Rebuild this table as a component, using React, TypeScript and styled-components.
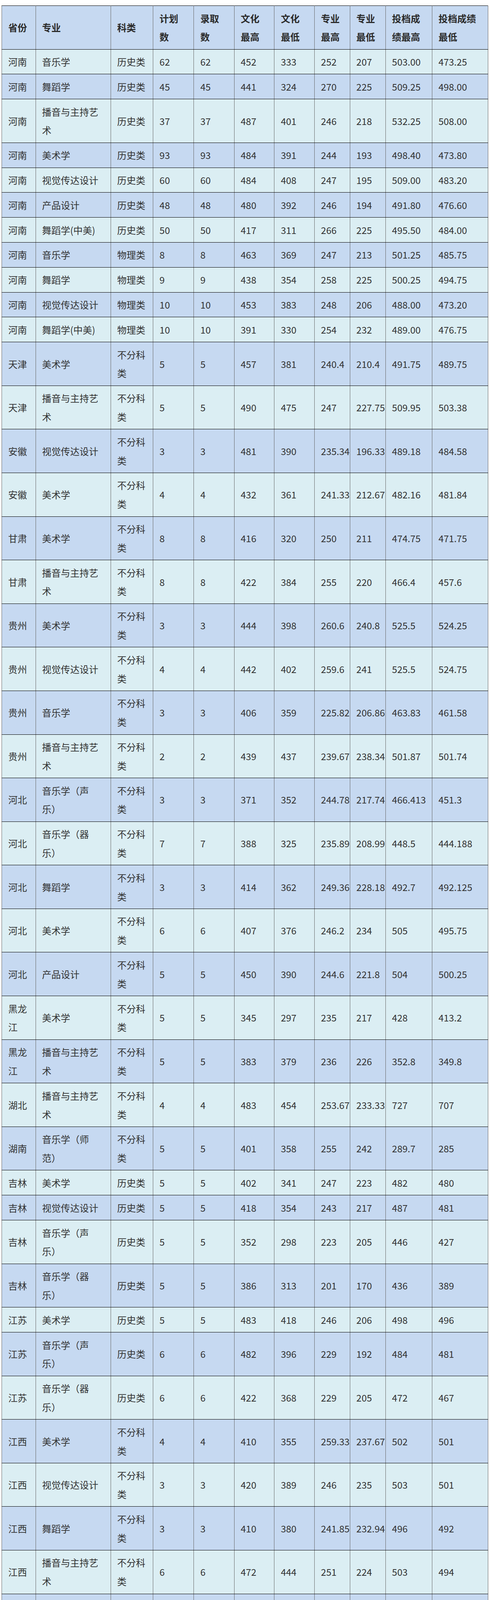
import React from 'react';
import styled, { createGlobalStyle } from 'styled-components';

const GlobalStyle = createGlobalStyle`
  html, body {
    margin: 0;
    padding: 0;
    background: #ffffff;
  }
  body {
    font-family: 'Noto Sans CJK SC', 'Noto Sans', sans-serif;
    color: #333333;
  }
`;

const palette = {
  blue: '#c6d9f1',
  cyan: '#dbeef3',
  rule: '#000000',
  divider: '#666666',
  text: '#333333',
};

const Page = styled.div`
  padding: 14px 3px 0 4px;
`;

const ScoreTable = styled.table`
  width: 1245px;
  table-layout: fixed;
  border-collapse: collapse;
  font-size: 24px;
  line-height: 47.8px;
  text-spacing-trim: space-all;
`;

const HeadRow = styled.tr`
  background-color: ${palette.blue};
`;

const BodyRow = styled.tr<{ $shaded: boolean }>`
  background-color: ${(props) => (props.$shaded ? palette.blue : palette.cyan)};
`;

const HeadCell = styled.th`
  padding: 7.5px 18px 7.5px 16px;
  text-align: left;
  vertical-align: middle;
  font-weight: 700;
  color: #2b2b2b;
  border-top: 1px solid ${palette.rule};
  border-bottom: 1px solid ${palette.rule};
  border-left: 1px solid ${palette.divider};
  border-right: 1px solid ${palette.divider};
  text-spacing-trim: space-all;
`;

const Cell = styled.td`
  padding: 7.5px 18px 7.5px 16px;
  text-align: left;
  vertical-align: middle;
  color: ${palette.text};
  border-top: 1px solid ${palette.rule};
  border-bottom: 1px solid ${palette.rule};
  border-left: 1px solid ${palette.divider};
  border-right: 1px solid ${palette.divider};
  white-space: normal;
  text-spacing-trim: space-all;
`;

const Num = styled.span`
  white-space: nowrap;
`;

const columnWidths = [86.5, 192.3, 108.3, 104.3, 103.4, 102.7, 102.6, 90.5, 91.3, 118.8, 143.7];

const headers = [
  '省份',
  '专业',
  '科类',
  '计划数',
  '录取数',
  '文化最高',
  '文化最低',
  '专业最高',
  '专业最低',
  '投档成绩最高',
  '投档成绩最低',
];

type Row = [string, string, string, string, string, string, string, string, string, string, string];

const rows: Row[] = [
  ['河南', '音乐学', '历史类', '62', '62', '452', '333', '252', '207', '503.00', '473.25'],
  ['河南', '舞蹈学', '历史类', '45', '45', '441', '324', '270', '225', '509.25', '498.00'],
  ['河南', '播音与主持艺术', '历史类', '37', '37', '487', '401', '246', '218', '532.25', '508.00'],
  ['河南', '美术学', '历史类', '93', '93', '484', '391', '244', '193', '498.40', '473.80'],
  ['河南', '视觉传达设计', '历史类', '60', '60', '484', '408', '247', '195', '509.00', '483.20'],
  ['河南', '产品设计', '历史类', '48', '48', '480', '392', '246', '194', '491.80', '476.60'],
  ['河南', '舞蹈学(中美)', '历史类', '50', '50', '417', '311', '266', '225', '495.50', '484.00'],
  ['河南', '音乐学', '物理类', '8', '8', '463', '369', '247', '213', '501.25', '485.75'],
  ['河南', '舞蹈学', '物理类', '9', '9', '438', '354', '258', '225', '500.25', '494.75'],
  ['河南', '视觉传达设计', '物理类', '10', '10', '453', '383', '248', '206', '488.00', '473.20'],
  ['河南', '舞蹈学(中美)', '物理类', '10', '10', '391', '330', '254', '232', '489.00', '476.75'],
  ['天津', '美术学', '不分科类', '5', '5', '457', '381', '240.4', '210.4', '491.75', '489.75'],
  ['天津', '播音与主持艺术', '不分科类', '5', '5', '490', '475', '247', '227.75', '509.95', '503.38'],
  ['安徽', '视觉传达设计', '不分科类', '3', '3', '481', '390', '235.34', '196.33', '489.18', '484.58'],
  ['安徽', '美术学', '不分科类', '4', '4', '432', '361', '241.33', '212.67', '482.16', '481.84'],
  ['甘肃', '美术学', '不分科类', '8', '8', '416', '320', '250', '211', '474.75', '471.75'],
  ['甘肃', '播音与主持艺术', '不分科类', '8', '8', '422', '384', '255', '220', '466.4', '457.6'],
  ['贵州', '美术学', '不分科类', '3', '3', '444', '398', '260.6', '240.8', '525.5', '524.25'],
  ['贵州', '视觉传达设计', '不分科类', '4', '4', '442', '402', '259.6', '241', '525.5', '524.75'],
  ['贵州', '音乐学', '不分科类', '3', '3', '406', '359', '225.82', '206.86', '463.83', '461.58'],
  ['贵州', '播音与主持艺术', '不分科类', '2', '2', '439', '437', '239.67', '238.34', '501.87', '501.74'],
  ['河北', '音乐学（声乐）', '不分科类', '3', '3', '371', '352', '244.78', '217.74', '466.413', '451.3'],
  ['河北', '音乐学（器乐）', '不分科类', '7', '7', '388', '325', '235.89', '208.99', '448.5', '444.188'],
  ['河北', '舞蹈学', '不分科类', '3', '3', '414', '362', '249.36', '228.18', '492.7', '492.125'],
  ['河北', '美术学', '不分科类', '6', '6', '407', '376', '246.2', '234', '505', '495.75'],
  ['河北', '产品设计', '不分科类', '5', '5', '450', '390', '244.6', '221.8', '504', '500.25'],
  ['黑龙江', '美术学', '不分科类', '5', '5', '345', '297', '235', '217', '428', '413.2'],
  ['黑龙江', '播音与主持艺术', '不分科类', '5', '5', '383', '379', '236', '226', '352.8', '349.8'],
  ['湖北', '播音与主持艺术', '不分科类', '4', '4', '483', '454', '253.67', '233.33', '727', '707'],
  ['湖南', '音乐学（师范）', '不分科类', '5', '5', '401', '358', '255', '242', '289.7', '285'],
  ['吉林', '美术学', '历史类', '5', '5', '402', '341', '247', '223', '482', '480'],
  ['吉林', '视觉传达设计', '历史类', '5', '5', '418', '354', '243', '217', '487', '481'],
  ['吉林', '音乐学（声乐）', '历史类', '5', '5', '352', '298', '223', '205', '446', '427'],
  ['吉林', '音乐学（器乐）', '历史类', '5', '5', '386', '313', '201', '170', '436', '389'],
  ['江苏', '美术学', '历史类', '5', '5', '483', '418', '246', '206', '498', '496'],
  ['江苏', '音乐学（声乐）', '历史类', '6', '6', '482', '396', '229', '192', '484', '481'],
  ['江苏', '音乐学（器乐）', '历史类', '6', '6', '422', '368', '229', '205', '472', '467'],
  ['江西', '美术学', '不分科类', '4', '4', '410', '355', '259.33', '237.67', '502', '501'],
  ['江西', '视觉传达设计', '不分科类', '3', '3', '420', '389', '246', '235', '503', '501'],
  ['江西', '舞蹈学', '不分科类', '3', '3', '410', '380', '241.85', '232.94', '496', '492'],
  ['江西', '播音与主持艺术', '不分科类', '6', '6', '472', '444', '251', '224', '503', '494'],
  ['辽宁', '美术学（师范）', '历史类', '4', '4', '407', '394', '232.2', '220.8', '63', '62'],
  ['辽宁', '视觉传达设计', '历史类', '5', '5', '437', '383', '237.2', '206.2', '62.5', '62'],
  ['辽宁', '播音与主持艺术', '历史类', '3', '3', '437', '422', '250.7', '246', '70.3', '69.9'],
  ['内蒙古', '播音与主持艺术', '不分科类', '8', '8', '477', '407', '244.8', '217.4', '500', '471'],
  ['内蒙古', '美术学', '不分科类', '8', '8', '434', '347', '255', '197', '469', '456'],
  ['山东', '美术学（师范）', '不分科类', '8', '8', '428', '354', '242.2', '212.4', '479.75', '478.25'],
  ['山东', '视觉传达设计', '不分科类', '7', '7', '434', '371', '240.8', '216.2', '488', '486.5'],
  ['山东', '产品设计', '不分科类', '7', '7', '461', '333', '255.4', '201.6', '485.75', '482.5'],
  ['重庆', '美术学', '不分科类', '2', '2', '391', '386', '250.6', '246.8', '202', '201'],
  ['重庆', '视觉传达设计', '不分科类', '3', '3', '454', '412', '241.4', '223', '203', '202'],
  ['重庆', '播音与主持艺术', '不分科类', '2', '2', '475', '466', '199.2', '189.6', '192', '189'],
];

const App = () => {
  return (
    <>
      <GlobalStyle />
      <Page>
        <ScoreTable>
          <colgroup>
            {columnWidths.map((w, i) => (
              <col key={i} style={{ width: w }} />
            ))}
          </colgroup>
          <thead>
            <HeadRow>
              {headers.map((h) => (
                <HeadCell key={h}>{h}</HeadCell>
              ))}
            </HeadRow>
          </thead>
          <tbody>
            {rows.map((row, index) => (
              <BodyRow key={index} $shaded={index % 2 === 1}>
                {row.map((value, col) => (
                  <Cell key={col}>{col >= 3 ? <Num>{value}</Num> : value}</Cell>
                ))}
              </BodyRow>
            ))}
          </tbody>
        </ScoreTable>
      </Page>
    </>
  );
};

export default App;
